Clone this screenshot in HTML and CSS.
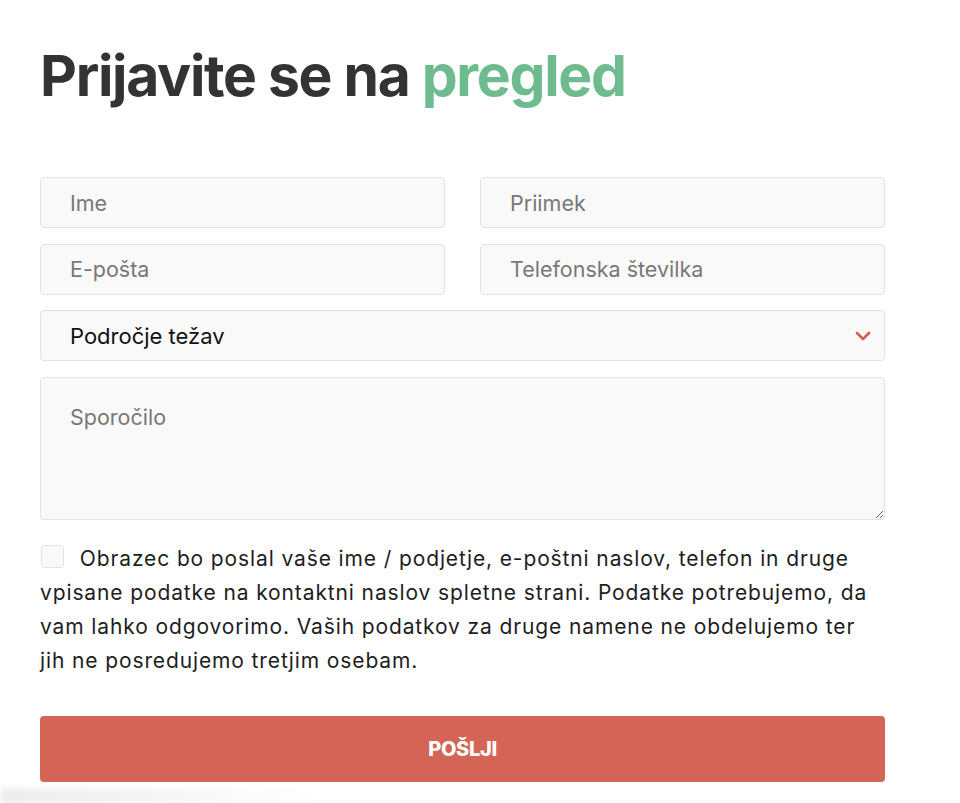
FILE: index.html
```html
<!DOCTYPE html>
<html lang="sl">
<head>
    <meta charset="UTF-8">
    <meta name="viewport" content="width=device-width, initial-scale=1.0">
    <title>Prijavite se na pregled</title>
    <link rel="stylesheet" href="styles.css">
</head>
<body>
    <div class="page">
        <h1 class="title">Prijavite se na <span class="accent">pregled</span></h1>

        <form class="form">
            <div class="row">
                <input type="text" class="field" placeholder="Ime">
                <input type="text" class="field" placeholder="Priimek">
            </div>
            <div class="row">
                <input type="email" class="field" placeholder="E-pošta">
                <input type="tel" class="field" placeholder="Telefonska številka">
            </div>
            <div class="select-wrap">
                <select class="field select">
                    <option>Področje težav</option>
                </select>
                <svg class="chevron" width="16" height="10" viewBox="0 0 16 10">
                    <path d="M2 2 L8 8 L14 2" fill="none" stroke="#cf5f50" stroke-width="2.6" stroke-linecap="round" stroke-linejoin="round"/>
                </svg>
            </div>
            <textarea class="field message" placeholder="Sporočilo"></textarea>

            <label class="consent">
                <input type="checkbox" class="check">
                Obrazec bo poslal vaše ime / podjetje, e-poštni naslov, telefon in druge vpisane podatke na kontaktni naslov spletne strani. Podatke potrebujemo, da vam lahko odgovorimo. Vaših podatkov za druge namene ne obdelujemo ter jih ne posredujemo tretjim osebam.
            </label>

            <button type="button" class="submit">POŠLJI</button>
        </form>
    </div>
    <div class="shade"></div>
</body>
</html>
```

FILE: styles.css
```css
body {
    margin: 0;
    background-color: #ffffff;
    font-family: Inter, "Noto Sans", sans-serif;
    color: #1e1e1e;
}

.page {
    width: 845px;
    padding: 40px 0 0 40px;
}

.title {
    margin: 0;
    font-size: 57px;
    font-weight: 700;
    letter-spacing: -1.3px;
    line-height: 72px;
    color: #333333;
}

.accent {
    color: #6dbb8e;
}

.form {
    margin-top: 65px;
    display: flex;
    flex-direction: column;
    gap: 15.5px;
}

.row {
    display: grid;
    grid-template-columns: 1fr 1fr;
    gap: 35px;
}

.field {
    box-sizing: border-box;
    width: 100%;
    height: 51px;
    padding: 0 29px;
    font-family: Inter, "Noto Sans", sans-serif;
    font-size: 21.5px;
    color: #111111;
    background-color: #f9f9f9;
    border: 1px solid #e2e2e2;
    border-radius: 4px;
    outline: none;
}

.field::placeholder {
    color: #787878;
}

.select-wrap {
    position: relative;
}

.select {
    appearance: none;
    -webkit-appearance: none;
    color: #111111;
    font-size: 22px;
}

.chevron {
    position: absolute;
    right: 14px;
    top: 21px;
    pointer-events: none;
}

.message {
    height: 143px;
    padding: 24px 29px;
    resize: vertical;
    line-height: 30px;
}

.consent {
    display: block;
    margin-top: 7px;
    font-size: 21px;
    letter-spacing: 0.88px;
    line-height: 34px;
    color: #1e1e1e;
}

.check {
    appearance: none;
    -webkit-appearance: none;
    width: 23px;
    height: 23px;
    margin: 0 9px 0 1px;
    vertical-align: -2px;
    border: 1px solid #e2e2e2;
    border-radius: 4px;
    background-color: #f9f9f9;
}

.submit {
    margin-top: 22px;
    height: 66px;
    border: none;
    border-radius: 4px;
    background-color: #d46455;
    color: #ffffff;
    font-family: Inter, "Noto Sans", sans-serif;
    font-size: 20px;
    font-weight: 800;
    letter-spacing: -0.3px;
    cursor: pointer;
}

.shade {
    position: fixed;
    left: 0;
    bottom: 0;
    width: 320px;
    height: 14px;
    background: linear-gradient(to right, rgba(0, 0, 0, 0.08), rgba(0, 0, 0, 0));
    filter: blur(3px);
}
```
